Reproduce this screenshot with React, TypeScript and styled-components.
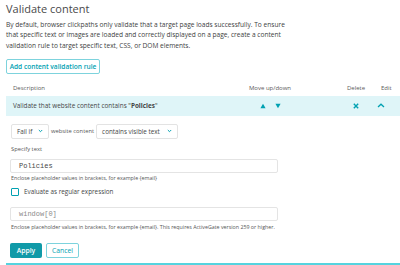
import React from "react";
import styled, { createGlobalStyle } from "styled-components";

const Global = createGlobalStyle`
  html, body { margin: 0; padding: 0; background: #fff; }
  body { font-family: "Open Sans", "Liberation Sans", sans-serif; color: #454646; overflow: hidden; }
  * { box-sizing: border-box; }
`;

const TEAL = "#00a1b2";

const Page = styled.div`
  width: 400px;
  height: 265px;
  padding: 2px 0 0 6px;
  overflow: hidden;
`;

const Title = styled.h2`
  margin: 0;
  font-size: 11px;
  line-height: 14px;
  font-weight: 400;
  color: #4a4a4a;
`;

const Intro = styled.p`
  margin: 4px 0 0;
  width: 285px;
  font-size: 6.6px;
  line-height: 10.3px;
  color: #404141;
`;

const OutlineButton = styled.button`
  display: inline-flex;
  align-items: center;
  justify-content: center;
  height: 15px;
  padding: 0;
  border: 1px solid #7dd3dd;
  border-radius: 2px;
  background: #fff;
  color: ${TEAL};
  font-family: inherit;
  font-size: 7px;
  font-weight: 600;
  white-space: nowrap;
  cursor: pointer;
`;

const AddButton = styled(OutlineButton)`
  margin-top: 8px;
  width: 94px;
  font-size: 6.6px;
`;

const Table = styled.div`
  margin-top: 7px;
  width: 394px;
`;

const Grid = styled.div`
  display: grid;
  grid-template-columns: 234px 60px 36px 40px 24px;
  align-items: center;
  white-space: nowrap;
`;

const HeaderRow = styled(Grid)`
  height: 15px;
  font-size: 6px;
  color: #5a5a5a;
`;

const Cell = styled.div<{ $align?: string; $pl?: number }>`
  display: flex;
  align-items: center;
  justify-content: ${(p) => p.$align ?? "center"};
  padding-left: ${(p) => p.$pl ?? 0}px;
  gap: 9px;
`;

const RuleRow = styled(Grid)`
  height: 20px;
  background: #dff5f8;
  font-size: 6.4px;
  color: #454646;
`;

const Panel = styled.div`
  padding: 8px 0 0 4px;
  height: 149px;
  border-bottom: 2px solid #55d3df;
`;

const SelectRow = styled.div`
  display: flex;
  align-items: center;
  gap: 2px;
  margin-left: 1px;
  white-space: nowrap;
`;

const Select = styled.div<{ $w: number }>`
  width: ${(p) => p.$w}px;
  height: 15px;
  display: flex;
  align-items: center;
  justify-content: space-between;
  padding: 0 5px 0 5px;
  border: 1px solid #e3e3e3;
  border-radius: 2px;
  font-size: 6.3px;
  color: #454646;
`;

const InlineLabel = styled.span`
  font-size: 5.8px;
  color: #555;
`;

const FieldLabel = styled.div`
  margin-top: 5px;
  font-size: 5.8px;
  line-height: 10px;
  color: #555;
  padding-left: 1px;
`;

const TextInput = styled.div<{ $mt: number; $placeholder?: boolean }>`
  margin-top: ${(p) => p.$mt}px;
  width: 268px;
  height: 14px;
  display: flex;
  align-items: center;
  padding-left: 8px;
  border: 1px solid #e4e4e4;
  border-radius: 2px;
  font-family: "Liberation Mono", "DejaVu Sans Mono", monospace;
  font-size: 7px;
  color: ${(p) => (p.$placeholder ? "#8a8a8a" : "#454646")};
`;

const Hint = styled.div<{ $mt?: number }>`
  margin-top: ${(p) => p.$mt ?? 0}px;
  font-size: 5.3px;
  line-height: 10px;
  color: #555;
  padding-left: 1px;
  white-space: nowrap;
`;

const CheckRow = styled.label`
  margin-top: 4px;
  height: 10px;
  display: flex;
  align-items: center;
  gap: 5px;
  padding-left: 1px;
  font-size: 6.3px;
  color: #454646;
`;

const Box = styled.span`
  width: 8px;
  height: 8px;
  border: 1px solid ${TEAL};
  border-radius: 1px;
  background: #fff;
`;

const Actions = styled.div`
  margin-top: 11px;
  display: flex;
  gap: 4px;
`;

const ApplyButton = styled.button`
  height: 15px;
  width: 32px;
  border: none;
  border-radius: 2px;
  background: #109aa8;
  color: #fff;
  font-family: inherit;
  font-size: 6.8px;
  font-weight: 600;
  padding: 0;
`;

const CancelButton = styled(OutlineButton)`
  width: 33px;
  font-size: 6.8px;
  font-weight: 400;
`;

const Chevron = () => (
  <svg width="5" height="4" viewBox="0 0 5 4">
    <path d="M0.8 1 L2.5 2.7 L4.2 1" fill="none" stroke={TEAL} strokeWidth="1" />
  </svg>
);

const Up = () => (
  <svg width="6" height="6" viewBox="0 0 6 6">
    <path d="M3 0.8 L5.6 5.2 L0.4 5.2 Z" fill={TEAL} />
  </svg>
);

const Down = () => (
  <svg width="6" height="6" viewBox="0 0 6 6">
    <path d="M0.4 0.8 L5.6 0.8 L3 5.2 Z" fill={TEAL} />
  </svg>
);

const Cross = () => (
  <svg width="6" height="6" viewBox="0 0 6 6">
    <path d="M0.8 0.8 L5.2 5.2 M5.2 0.8 L0.8 5.2" stroke={TEAL} strokeWidth="1.4" />
  </svg>
);

const Caret = () => (
  <svg width="8" height="5" viewBox="0 0 8 5">
    <path d="M1 4 L4 1.2 L7 4" fill="none" stroke={TEAL} strokeWidth="1.3" />
  </svg>
);

export default function App() {
  return (
    <>
      <Global />
      <Page>
        <Title>Validate content</Title>
        <Intro>
          By default, browser clickpaths only validate that a target page loads successfully. To ensure
          that specific text or images are loaded and correctly displayed on a page, create a content
          validation rule to target specific text, CSS, or DOM elements.
        </Intro>
        <AddButton>Add content validation rule</AddButton>
        <Table>
          <HeaderRow>
            <Cell $align="flex-start" $pl={7}>Description</Cell>
            <Cell>Move up/down</Cell>
            <span />
            <Cell>Delete</Cell>
            <Cell $align="flex-start" $pl={5}>Edit</Cell>
          </HeaderRow>
          <RuleRow>
            <Cell $align="flex-start" $pl={7}>
              <span>
                Validate that website content contains "<b>Policies</b>"
              </span>
            </Cell>
            <Cell>
              <Up />
              <Down />
            </Cell>
            <span />
            <Cell>
              <Cross />
            </Cell>
            <Cell $align="flex-start" $pl={1}>
              <Caret />
            </Cell>
          </RuleRow>
          <Panel>
            <SelectRow>
              <Select $w={38}>
                <span>Fail if</span>
                <Chevron />
              </Select>
              <InlineLabel>website content</InlineLabel>
              <Select $w={82}>
                <span>contains visible text</span>
                <Chevron />
              </Select>
            </SelectRow>
            <FieldLabel>Specify text</FieldLabel>
            <TextInput $mt={5}>Policies</TextInput>
            <Hint>Enclose placeholder values in brackets, for example {"{email}"}</Hint>
            <CheckRow>
              <Box />
              <span>Evaluate as regular expression</span>
            </CheckRow>
            <TextInput $mt={10} $placeholder>window[0]</TextInput>
            <Hint $mt={1}>
              Enclose placeholder values in brackets, for example {"{email}"}. This requires ActiveGate version 259 or higher.
            </Hint>
            <Actions>
              <ApplyButton>Apply</ApplyButton>
              <CancelButton>Cancel</CancelButton>
            </Actions>
          </Panel>
        </Table>
      </Page>
    </>
  );
}
